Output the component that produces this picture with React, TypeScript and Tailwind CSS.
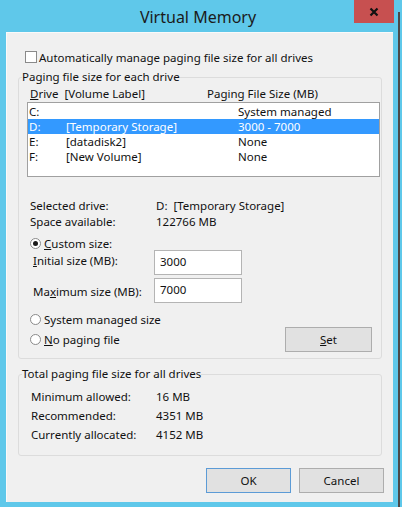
import React from 'react';

const font = { fontFamily: '"Noto Sans", "Open Sans", sans-serif' };

function Check() {
  return <span className="w-[12px] h-[12px] border border-[#8a8a8a] bg-white shrink-0" />;
}

function Radio({ on }: { on?: boolean }) {
  return (
    <span className="w-[11px] h-[11px] rounded-full border border-[#8a8a8a] bg-white shrink-0 flex items-center justify-center">
      {on && <span className="w-[5px] h-[5px] rounded-full bg-[#1a1a1a]" />}
    </span>
  );
}

function Btn({ children, def, w = 'w-[85px]' }: { children: React.ReactNode; def?: boolean; w?: string }) {
  return (
    <div
      className={`${w} h-[25px] flex items-center justify-center text-[11.5px] bg-[#e1e1e1] border ${def ? 'border-[#5c9bd6]' : 'border-[#adadad]'}`}
    >
      {children}
    </div>
  );
}

const drives = [
  { d: 'C:', label: '', size: 'System managed' },
  { d: 'D:', label: '[Temporary Storage]', size: '3000 - 7000', sel: true },
  { d: 'E:', label: '[datadisk2]', size: 'None' },
  { d: 'F:', label: '[New Volume]', size: 'None' },
];

export default function App() {
  return (
    <div style={font} className="w-[402px] h-[507px] bg-[#5fc8ea] flex flex-col relative overflow-hidden text-[#111]">
      {/* title bar */}
      <div className="h-[32px] shrink-0 flex items-center justify-center">
        <span className="text-[16px] text-[#1b1b1b] ml-[-6px] mt-[2px]">Virtual Memory</span>
      </div>
      <div className="absolute left-[354px] top-0 w-[40px] h-[23px] bg-[#c75050] flex items-center justify-center">
        <svg width="10" height="10" viewBox="0 0 10 10">
          <path d="M1.5 1.5 L8.5 8.5 M8.5 1.5 L1.5 8.5" stroke="#111" strokeWidth="2.2" />
        </svg>
      </div>
      <div className="absolute right-[2px] top-[12px] bottom-0 w-[2px] bg-[#4a4a4a]" />

      {/* client */}
      <div className="ml-[6px] mr-[9px] mb-[5px] flex-1 bg-[#f0f0f0] border-l border-t border-[#fafafa] flex flex-col text-[11.5px] leading-[13px]">
        <div className="mt-[17px] ml-[18px] h-[14px] flex items-center gap-[2px]">
          <Check />
          <span>Automatically manage paging file size for all drives</span>
        </div>

        {/* group 1 */}
        <fieldset className="mt-[5px] ml-[11px] mr-[11px] border border-[#dcdcdc] rounded-[3px] pl-[3px] pb-[6px]">
          <legend className="leading-[16px]">Paging file size for each drive</legend>
          <div className="mt-[1px] h-[14px] flex items-center">
            <span className="ml-[8px] w-[177px]"><span className="underline">D</span>rive&nbsp;&nbsp;[Volume Label]</span>
            <span>Paging File Size (MB)</span>
          </div>
          <div className="mt-[2px] ml-[5px] mr-[1px] h-[75px] bg-white border border-[#a0a0a0] pt-[1px] flex flex-col">
            {drives.map((r) => (
              <div
                key={r.d}
                className={`h-[15px] flex items-center ${r.sel ? 'bg-[#3399ff] text-white' : ''}`}
              >
                <span className="pl-[1px] w-[38px]">{r.d}</span>
                <span className="w-[172px]">{r.label}</span>
                <span>{r.size}</span>
              </div>
            ))}
          </div>

          <div className="mt-[20px] h-[16px] flex items-center ml-[8px]">
            <span className="w-[126px]">Selected drive:</span>
            <span>D:&nbsp;&nbsp;[Temporary Storage]</span>
          </div>
          <div className="h-[16px] flex items-center ml-[8px]">
            <span className="w-[126px]">Space available:</span>
            <span>122766 MB</span>
          </div>

          <div className="mt-[7px] h-[14px] flex items-center ml-[8px] gap-[3px]">
            <Radio on />
            <span><span className="underline">C</span>ustom size:</span>
          </div>
          <div className="h-[25px] flex items-center ml-[11px]">
            <span className="w-[121px] mt-[-4px]"><span className="underline">I</span>nitial size (MB):</span>
            <div className="w-[88px] h-[25px] bg-white border border-[#b4b4b4] pl-[5px] pt-[4px]">3000</div>
          </div>
          <div className="mt-[3px] h-[25px] flex items-center ml-[11px]">
            <span className="w-[121px] mt-[2px]">Ma<span className="underline">x</span>imum size (MB):</span>
            <div className="w-[88px] h-[25px] bg-white border border-[#b4b4b4] pl-[5px] pt-[4px]">7000</div>
          </div>

          <div className="mt-[8px] h-[16px] flex items-center ml-[8px] gap-[3px]">
            <Radio />
            <span>System managed size</span>
          </div>
          <div className="h-[25px] flex items-center ml-[8px]">
            <div className="flex items-center gap-[3px] flex-1">
              <Radio />
              <span><span className="underline">N</span>o paging file</span>
            </div>
            <div className="mr-[9px]">
              <Btn w="w-[87px]"><span className="underline">S</span>et</Btn>
            </div>
          </div>
        </fieldset>

        {/* group 2 */}
        <fieldset className="mt-[7px] ml-[11px] mr-[11px] border border-[#dcdcdc] rounded-[3px] pl-[3px] pb-[11px]">
          <legend className="leading-[16px]">Total paging file size for all drives</legend>
          <div className="mt-[5px] h-[19px] flex items-center ml-[9px]">
            <span className="w-[125px]">Minimum allowed:</span>
            <span>16 MB</span>
          </div>
          <div className="h-[19px] flex items-center ml-[9px]">
            <span className="w-[125px]">Recommended:</span>
            <span>4351 MB</span>
          </div>
          <div className="h-[19px] flex items-center ml-[9px]">
            <span className="w-[125px]">Currently allocated:</span>
            <span>4152 MB</span>
          </div>
        </fieldset>

        <div className="mt-[12px] flex justify-end gap-[8px] mr-[9px]">
          <Btn def>OK</Btn>
          <Btn>Cancel</Btn>
        </div>
      </div>
    </div>
  );
}
